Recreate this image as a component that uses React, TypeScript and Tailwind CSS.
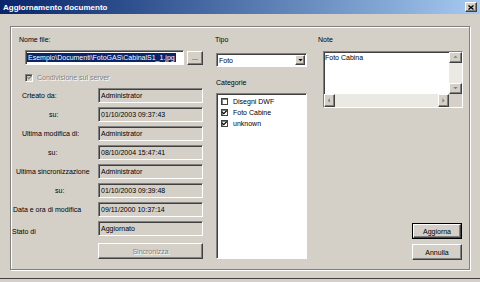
import React from "react";

const raised =
  "border border-t-white border-l-white border-b-[#404040] border-r-[#404040] shadow-[inset_-1px_-1px_0_#808080]";
const sunken =
  "border border-t-[#808080] border-l-[#808080] border-b-white border-r-white shadow-[inset_1px_1px_0_#404040]";

const fields = [
  { label: "Crteato da:", pad: "pl-[11px]", value: "Administrator" },
  { label: "su:", pad: "pl-[38px]", value: "01/10/2003 09:37:43" },
  { label: "Ultima modifica di:", pad: "pl-[11px]", value: "Administrator" },
  { label: "su:", pad: "pl-[37px]", value: "08/10/2004 15:47:41" },
  { label: "Ultima sincronizzazione", pad: "pl-[5px]", value: "Administrator" },
  { label: "su:", pad: "pl-[44px]", value: "01/10/2003 09:39:48" },
  { label: "Data e ora di modifica", pad: "pl-[2px]", value: "09/11/2000 10:37:14" },
  { label: "Stato di", pad: "pl-[1px] pt-[6px]", value: "Aggiornato" },
];

const categories = [
  { label: "Disegni DWF", checked: false },
  { label: "Foto Cabine", checked: true },
  { label: "unknown", checked: true },
];

function Check({ color = "#000" }: { color?: string }) {
  return (
    <svg width="5" height="5" viewBox="0 0 7 7">
      <path d="M0.5 3 L2.5 5 L6.5 1" fill="none" stroke={color} strokeWidth="1.6" />
    </svg>
  );
}

function Arrow({ dir, color = "#000" }: { dir: "up" | "down" | "left" | "right"; color?: string }) {
  const d = {
    up: "M0.5 4 L3.5 1 L6.5 4 Z",
    down: "M0.5 1.5 L3.5 4.5 L6.5 1.5 Z",
    left: "M4 0.5 L1 3.5 L4 6.5 Z",
    right: "M2 0.5 L5 3.5 L2 6.5 Z",
  }[dir];
  return (
    <svg width="5" height="5" viewBox="0 0 7 7">
      <path d={d} fill={color} />
    </svg>
  );
}

export default function App() {
  return (
    <div
      className="relative w-[480px] h-[282px] overflow-hidden bg-[#d4d0c8] text-[7px] leading-[9px] text-black"
      style={{ fontFamily: '"Liberation Sans", Arial, sans-serif' }}
    >
      {/* Title bar */}
      <div className="flex h-[14px] items-center justify-between bg-gradient-to-r from-[#0a246a] to-[#a6caf0] pl-[3px] pr-[3px]">
        <span className="text-[8px] font-bold text-white">Aggiornamento documento</span>
        <div className={`flex h-[10px] w-[12px] items-center justify-center bg-[#d4d0c8] ${raised}`}>
          <svg width="6" height="5" viewBox="0 0 6 5">
            <path d="M0.5 0.5 L5.5 4.5 M5.5 0.5 L0.5 4.5" stroke="#000" strokeWidth="1.3" />
          </svg>
        </div>
      </div>

      {/* Body */}
      <div className="px-[10px] pt-[12px]">
        <div className="flex h-[244px] w-[460px] border border-[#808080] pt-[8px] shadow-[inset_1px_1px_0_#fff,1px_1px_0_#fff]">
          {/* Left column */}
          <div className="flex w-[193px] flex-col">
            <div className="pl-[8px]">Nome file:</div>
            <div className="mt-[6px] ml-[14px] flex h-[15px] items-center gap-[3px]">
              <div className={`flex h-[15px] w-[159px] items-center bg-white px-[1px] ${sunken}`}>
                <span className="whitespace-nowrap bg-[#0a246a] px-[1px] text-white">
                  Esempio\Documenti\FotoGAS\CabinalS1_1.jpg
                </span>
              </div>
              <div className={`flex h-[14px] w-[16px] items-center justify-center bg-[#d4d0c8] ${raised}`}>...</div>
            </div>
            <div className="mt-[8px] ml-[14px] flex h-[9px] items-center gap-[4px]">
              <div className={`flex h-[8px] w-[8px] items-center justify-center bg-[#d4d0c8] ${sunken}`}>
                <Check color="#808080" />
              </div>
              <span className="text-[#808080] [text-shadow:1px_1px_0_#fff]">Condivisione sul server</span>
            </div>
            <div className="mt-[6px] flex flex-col gap-[4px]">
              {fields.map((f, i) => (
                <div key={i} className="flex h-[15px] items-center">
                  <div className={`w-[87px] whitespace-nowrap ${f.pad}`}>{f.label}</div>
                  <div className={`flex h-[15px] w-[105px] items-center bg-[#d4d0c8] px-[2px] ${sunken}`}>{f.value}</div>
                </div>
              ))}
            </div>
            <div
              className={`mt-[7px] ml-[87px] flex h-[16px] w-[105px] items-center justify-center bg-[#d4d0c8] text-[#808080] [text-shadow:1px_1px_0_#fff] ${raised}`}
            >
              Sincronizza
            </div>
          </div>

          {/* Middle column */}
          <div className="ml-[12px] flex w-[91px] flex-col">
            <div className="-ml-[1px]">Tipo</div>
            <div className={`mt-[9px] flex h-[14px] items-center justify-between bg-white pl-[2px] pr-[1px] ${sunken}`}>
              <span>Foto</span>
              <div className={`flex h-[10px] w-[10px] items-center justify-center bg-[#d4d0c8] ${raised}`}>
                <Arrow dir="down" />
              </div>
            </div>
            <div className="mt-[11px]">Categorie</div>
            <div className={`mt-[6px] flex h-[166px] flex-col gap-[3px] bg-white pl-[4px] pt-[3px] ${sunken}`}>
              {categories.map((c) => (
                <div key={c.label} className="flex h-[8px] items-center gap-[5px]">
                  <div className="flex h-[7px] w-[7px] items-center justify-center border border-[#404040] bg-white shadow-[inset_1px_1px_0_#808080]">
                    {c.checked && <Check />}
                  </div>
                  <span>{c.label}</span>
                </div>
              ))}
            </div>
          </div>

          {/* Right column */}
          <div className="ml-[11px] flex w-[145px] flex-col pb-[9px]">
            <div>Note</div>
            <div className={`mt-[7px] ml-[5px] flex h-[57px] flex-col bg-white ${sunken}`}>
              <div className="flex flex-1">
                <div className="flex-1 pl-[1px] pt-[1px]">Foto Cabina</div>
                <div className="flex w-[13px] flex-col justify-between bg-[#ebe9e4]">
                  <div className={`flex h-[11px] items-center justify-center bg-[#d4d0c8] ${raised}`}>
                    <Arrow dir="up" color="#808080" />
                  </div>
                  <div className={`flex h-[11px] items-center justify-center bg-[#d4d0c8] ${raised}`}>
                    <Arrow dir="down" color="#808080" />
                  </div>
                </div>
              </div>
              <div className="flex h-[13px]">
                <div className="flex flex-1 justify-between bg-[#ebe9e4]">
                  <div className={`flex w-[11px] items-center justify-center bg-[#d4d0c8] ${raised}`}>
                    <Arrow dir="left" color="#808080" />
                  </div>
                  <div className={`flex w-[11px] items-center justify-center bg-[#d4d0c8] ${raised}`}>
                    <Arrow dir="right" color="#808080" />
                  </div>
                </div>
                <div className="w-[13px] bg-[#d4d0c8]" />
              </div>
            </div>
            <div className="mt-auto mr-[1px] flex flex-col items-end gap-[5px]">
              <div className="border border-black">
                <div className={`flex h-[14px] w-[48px] items-center justify-center bg-[#d4d0c8] ${raised}`}>Aggiorna</div>
              </div>
              <div className={`flex h-[16px] w-[50px] items-center justify-center bg-[#d4d0c8] ${raised}`}>Annulla</div>
            </div>
          </div>
        </div>
      </div>
      <div className="absolute bottom-[3px] left-0 right-0 h-[1px] bg-[#404040]" />
    </div>
  );
}
